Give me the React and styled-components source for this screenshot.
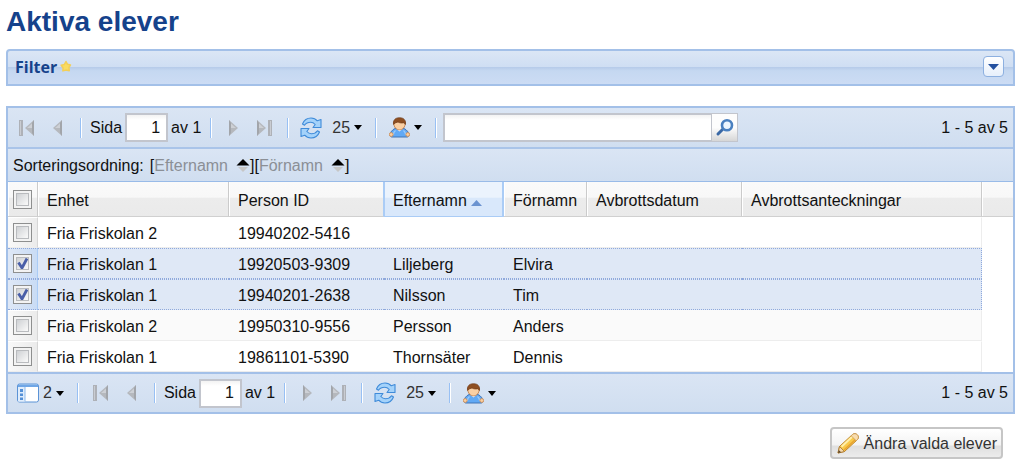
import React, { useState } from "react";
import styled, { createGlobalStyle, css } from "styled-components";

const GlobalStyle = createGlobalStyle`
  *, *::before, *::after { box-sizing: border-box; }
  body {
    margin: 0;
    background: #fff;
    color: #111;
    font: 16px/20px "Liberation Sans", Arial, sans-serif;
  }
  button, input { font: inherit; color: inherit; }
`;

const Page = styled.main`
  padding: 6px 9px 10px 6px;
`;

const Title = styled.h1`
  margin: 0 0 12px;
  color: #15428b;
  font-size: 28px;
  line-height: 31px;
  font-weight: bold;
`;

const FilterPanel = styled.section`
  display: flex;
  align-items: center;
  height: 37px;
  margin-bottom: 20px;
  padding: 0 9px 2px 7px;
  border: 2px solid #a3c0e8;
  border-radius: 4px 4px 0 0;
  background: linear-gradient(#dbe6f5 0, #cfdef3 48%, #b6cbe9 49%, #c5d8f1 60%, #ccdcf4 100%);
`;

const FilterTitle = styled.h2`
  margin: 0;
  color: #15428b;
  font: bold 16px/20px "Open Sans", "Noto Sans", sans-serif;
`;

const ToggleButton = styled.button`
  display: flex;
  align-items: center;
  justify-content: center;
  width: 21px;
  height: 21px;
  margin-left: auto;
  padding: 0;
  border: 1px solid #8db0e0;
  border-radius: 4px;
  background: linear-gradient(#fff, #e6effb);
`;

const Grid = styled.section`
  border: 2px solid #a3c0e8;
`;

const bar = css`
  display: flex;
  align-items: center;
  background: linear-gradient(#dae5f4, #d0def0);
`;

const Toolbar = styled.div`
  ${bar}
  height: 39px;
  padding: 0 5px 0 3px;
`;

const SortBar = styled.div`
  ${bar}
  height: 35px;
  padding: 2px 5px 0;
  border-top: 2px solid #a9c4e9;
  border-bottom: 1px solid #99bbe8;
`;

const SortLabel = styled.span`
  margin-right: 6px;
`;

const SortField = styled.button`
  display: flex;
  align-items: center;
  gap: 8px;
  padding: 0;
  border: 0;
  background: none;
  color: #8b8f96;
`;

const Separator = styled.span`
  flex: none;
  width: 2px;
  height: 20px;
  margin: 0 6px 0 7px;
  border-left: 1px solid #98c0f4;
  background: #fff;
`;

const IconButton = styled.button`
  display: flex;
  flex: none;
  align-items: center;
  justify-content: center;
  width: 31px;
  height: 30px;
  padding: 0;
  border: 0;
  background: none;
`;

const MenuButton = styled.button`
  display: flex;
  flex: none;
  align-items: center;
  gap: 4px;
  height: 30px;
  padding: 0 6px;
  border: 0;
  background: none;
  color: #333;
`;

const PageLabel = styled.label`
  display: flex;
  flex: none;
  align-items: center;
  gap: 3px;
  padding: 0 2px;
`;

const PageInput = styled.input`
  width: 43px;
  height: 29px;
  padding: 0 6px;
  border: 2px solid #c2c5cd;
  background: linear-gradient(#f3f3f3, #fff 5px);
  text-align: right;
`;

const Search = styled.form`
  display: flex;
  flex: 0 1 295px;
  min-width: 0;
  height: 29px;
`;

const SearchInput = styled.input`
  flex: 1;
  min-width: 0;
  padding: 0 6px;
  border: 2px solid #c2c5cd;
  border-right-width: 1px;
  background: linear-gradient(#f3f3f3, #fff 5px);
`;

const SearchButton = styled.button`
  display: flex;
  align-items: center;
  justify-content: center;
  width: 26px;
  padding: 0;
  border: 1px solid #c2c5cd;
  border-left: 0;
  background: linear-gradient(#fdfdfd 50%, #d6d6d6);
`;

const RangeText = styled.span`
  margin-left: auto;
  white-space: nowrap;
`;

const Table = styled.table`
  width: 100%;
  table-layout: fixed;
  border-collapse: separate;
  border-spacing: 0;
`;

const Col = styled.col`
  width: ${(p) => (p.$width ? p.$width + "px" : "auto")};
`;

const HeadCell = styled.th`
  height: 35px;
  padding: 3px 0 0 9px;
  border-right: 1px solid #cbcbcb;
  border-bottom: 1px solid #d0d0d0;
  background: linear-gradient(#fafafa 0, #f8f8f8 45%, #ececec 47%, #eaeaea 100%);
  box-shadow: inset 1px 0 #fff;
  font-weight: normal;
  text-align: left;
  white-space: nowrap;
  ${(p) =>
    p.$sorted &&
    css`
      border-color: #aaccf6;
      background: linear-gradient(#ebf3fd 0, #ebf3fd 45%, #d9e8fb 47%, #d9e8fb 100%);
      box-shadow: inset 1px 0 #aaccf6, inset -1px 0 #aaccf6;
    `}
  ${(p) => p.$beforeSorted && css`border-right-color: #aaccf6;`}
  ${(p) => p.$last && css`border-right: 0;`}
`;

const CheckHead = styled(HeadCell)`
  padding: 1px 1px 0 0;
  text-align: center;
`;

const Row = styled.tr`
  background: ${(p) => (p.$selected ? "#dfe8f6" : p.$striped ? "#fafafa" : "#fff")};
`;

const Cell = styled.td`
  height: 31px;
  padding: 3px 0 0 9px;
  border-top: 1px solid ${(p) => (p.$striped ? "#fafafa" : "#fff")};
  border-bottom: 1px solid #ededed;
  ${(p) =>
    p.$selected &&
    css`
      border-top: 1px dotted #8fa9dc;
      border-bottom: 1px dotted #8fa9dc;
    `}
  ${(p) => p.$edge && css`border-right: 1px ${p.$selected ? "dotted #8fa9dc" : "solid #ededed"};`}
`;

const CheckCell = styled(Cell)`
  padding: 0 1px 0 0;
  border-right: 1px solid ${(p) => (p.$selected ? "#aaccf6" : "#d6d6d6")};
  background: ${(p) =>
    p.$selected ? "linear-gradient(90deg, #dfe8f6, #c9dcf5)" : "linear-gradient(90deg, #f9f9f9, #ebebeb)"};
  text-align: center;
`;

const EmptyCell = styled.td`
  background: #fff;
`;

const CheckBox = styled.input`
  appearance: none;
  display: block;
  width: 19px;
  height: 19px;
  margin: 0 auto;
  border: 1px solid #8e8f8f;
  background: linear-gradient(135deg, #c3c6ca, #f6f6f6 75%);
  box-shadow: inset 0 0 0 2px #f3f3f3, inset 0 0 0 3px #b9bbbe;
  &:checked {
    background: url("data:image/svg+xml,%3Csvg xmlns='http://www.w3.org/2000/svg' viewBox='0 0 17 17'%3E%3Cpath d='M4.500 7.500l3.500 5.500 5-9.500' fill='none' stroke='%234a5fa8' stroke-width='2.800'/%3E%3C/svg%3E"),
      linear-gradient(135deg, #c3c6ca, #f6f6f6 75%);
  }
`;

const FooterBar = styled(Toolbar)`
  border-top: 2px solid #a3c0e8;
  height: 40px;
`;

const Actions = styled.div`
  display: flex;
  justify-content: flex-end;
  padding: 13px 12px 0 0;
`;

const ActionButton = styled.button`
  display: flex;
  align-items: center;
  gap: 4px;
  height: 32px;
  padding: 2px 4px 0;
  border: 2px solid #c6c6c6;
  border-radius: 4px;
  background: linear-gradient(#fff 0, #f3f3f3 58%, #dfdfdf 60%, #ececec 100%);
  color: #333;
`;

const Star = () => (
  <svg width="16" height="14" viewBox="0 0 16 14" aria-hidden="true">
    <path
      d="M9 1.500l1.500 2.800 3 .6-1.600 2.600.4 3.200-3.300-.7-3.100.9.2-3.200-1.900-2.500 3.200-.8z"
      fill="#f9dc62"
      stroke="#f3cf58"
      strokeWidth="1.500"
      strokeLinejoin="round"
    />
  </svg>
);

const Caret = ({ color = "#000", up = false, width = 8 }) => (
  <svg width={width} height={width > 8 ? 6 : 5} viewBox="0 0 8 5" preserveAspectRatio="none" aria-hidden="true">
    <path d={up ? "M0 5h8L4 0z" : "M0 0h8L4 5z"} fill={color} />
  </svg>
);

const NavIcon = ({ kind }) => {
  const flip = kind === "next" || kind === "last";
  const barred = kind === "first" || kind === "last";
  const w = barred ? 17 : 11;
  const x = barred ? 7 : 1;
  return (
    <svg width={w} height="18" viewBox={`0 0 ${w} 18`} aria-hidden="true">
      <g transform={flip ? `translate(${w} 0) scale(-1 1)` : undefined}>
        {barred && (
          <>
            <rect x="1" y="1" width="4" height="16" fill="#aeb1b7" />
            <rect x="2" y="2" width="1" height="14" fill="#c9ccd2" />
          </>
        )}
        <path d={`M${x + 9} 1v16L${x} 9z`} fill="#b5b8bd" />
        <path d={`M${x + 9} 1v16l-2-3V4z`} fill="#a2a5aa" />
        <path d={`M${x + 7} 4.500L${x + 2} 9 ${x + 7} 9z`} fill="#cdd0d5" />
      </g>
    </svg>
  );
};

const RefreshIcon = () => (
  <svg width="22" height="22" viewBox="0 0 22 22" aria-hidden="true">
    <g fill="#a4d2fa" stroke="#3f8bd9" strokeWidth="1.100" strokeLinejoin="round">
      <path d="M2.500 7C4 3.200 7.300 1 11 1c2.600 0 4.800 1 6.300 2.800L21 2.500v8h-8l2.200-3C13.900 6 12.500 5.200 10.700 5.200 8 5.200 6 6 4.500 8.200z" />
      <path d="M19.500 15C18 18.800 14.700 21 11 21c-2.600 0-4.800-1-6.300-2.800L1 19.500v-8h8l-2.200 3c1.300 1.500 2.700 2.300 4.500 2.300 2.700 0 4.700-.8 6.200-3z" />
    </g>
  </svg>
);

const UserIcon = () => (
  <svg width="21" height="21" viewBox="0 0 21 21" aria-hidden="true">
    <path d="M6 11.500C3 13 1.500 15 1 18c0 1 .8 2 1.700 2h15.600c.9 0 1.700-1 1.700-2-.5-3-2-5-5-6.500z" fill="#61a9f5" stroke="#4374b5" />
    <path d="M6.500 13.500c-1.500 1-2 2.500-2.300 4.500M14.500 13.500c1.500 1 2 2.500 2.300 4.500" fill="none" stroke="#9ccbfa" strokeWidth="1.400" />
    <path d="M7.500 12l3 2.500 3-2.500z" fill="#e9f4ff" />
    <circle cx="2.200" cy="17.500" r="1.900" fill="#f9cfa2" stroke="#d08a4d" strokeWidth=".8" />
    <circle cx="18.800" cy="17.500" r="1.900" fill="#f9cfa2" stroke="#d08a4d" strokeWidth=".8" />
    <path d="M4.800 6c0 4.300 2.400 6.800 5.700 6.800s5.700-2.500 5.700-6.800c0-2-2-3.500-5.700-3.500S4.800 4 4.800 6z" fill="#fbd0a3" stroke="#c07a42" strokeWidth=".8" />
    <path d="M4.600 7.500C3.800 3.500 6 .7 10.500.7s6.700 2.800 5.900 6.800L15 5.700c-2 .5-4.500.3-6-.7L6 6z" fill="#8e4f22" stroke="#703a15" strokeWidth=".7" />
  </svg>
);

const SearchIcon = () => (
  <svg width="20" height="20" viewBox="0 0 20 20" aria-hidden="true">
    <path d="M7.500 11.500L3 16" stroke="#3a68a5" strokeWidth="3" strokeLinecap="round" />
    <circle cx="12" cy="7.200" r="5" fill="#edf6ff" stroke="#4a80c0" strokeWidth="2.600" />
  </svg>
);

const LayoutIcon = () => (
  <svg width="22" height="20" viewBox="0 0 22 20" aria-hidden="true">
    <rect x=".5" y="1" width="21" height="18" rx="2" fill="#fff" stroke="#5b93d6" />
    <path d="M1 1.500h20v2.500H1z" fill="#6fa6e6" />
    <path d="M1 4h7v14.500H1z" fill="#e0edfc" />
    <path d="M8 4v14.500" stroke="#8fbaec" />
    <path d="M3 6h3v3H3zM3 10.500h3v2.500H3zM3 14.500h3V17H3z" fill="#5590d6" />
  </svg>
);

const SortIcon = () => (
  <svg width="14" height="14" viewBox="0 0 14 14" aria-hidden="true">
    <path d="M.5 6.500h13L7 0z" fill="#000" />
    <path d="M2 8h10l-5 5z" fill="#c6c6c6" />
  </svg>
);

const PencilIcon = () => (
  <svg width="24" height="24" viewBox="0 0 24 24" aria-hidden="true">
    <path d="M2 21l1.500-6.500L16.500 2.500c1.500-1.300 3.500-1 4.800.3s1.500 3.200.2 4.700L8.500 19.500z" fill="#f9c94a" stroke="#c08427" strokeLinejoin="round" />
    <path d="M5.500 14.700L17 4" stroke="#ffefab" strokeWidth="2" />
    <path d="M8 18L20 7" stroke="#e9a431" strokeWidth="1.500" />
    <path d="M16.500 2.500c1.500-1.300 3.500-1 4.800.3s1.500 3.200.2 4.700l-1.300 1.300-5-5z" fill="#f8dcae" stroke="#c99b59" strokeWidth=".8" />
    <path d="M3.500 14.500l5 5L2 21z" fill="#f4d9ae" stroke="#a6732b" strokeWidth=".8" />
    <path d="M2 21l.8-3 2.300 2.200z" fill="#5d472a" />
  </svg>
);

const people = [
  ["Fria Friskolan 2", "19940202-5416", "", ""],
  ["Fria Friskolan 1", "19920503-9309", "Liljeberg", "Elvira"],
  ["Fria Friskolan 1", "19940201-2638", "Nilsson", "Tim"],
  ["Fria Friskolan 2", "19950310-9556", "Persson", "Anders"],
  ["Fria Friskolan 1", "19861101-5390", "Thornsäter", "Dennis"],
];

const columns = [
  { name: "Enhet", width: 191 },
  { name: "Person ID", width: 155 },
  { name: "Efternamn", width: 120, sorted: true },
  { name: "Förnamn", width: 83 },
  { name: "Avbrottsdatum", width: 155 },
  { name: "Avbrottsanteckningar", width: 240 },
];

const Paging = () => (
  <>
    <IconButton aria-label="Första sidan"><NavIcon kind="first" /></IconButton>
    <IconButton aria-label="Föregående sida"><NavIcon kind="prev" /></IconButton>
    <Separator />
    <PageLabel>
      Sida
      <PageInput type="text" defaultValue="1" />
      av 1
    </PageLabel>
    <Separator />
    <IconButton aria-label="Nästa sida"><NavIcon kind="next" /></IconButton>
    <IconButton aria-label="Sista sidan"><NavIcon kind="last" /></IconButton>
    <Separator />
    <IconButton aria-label="Uppdatera"><RefreshIcon /></IconButton>
    <MenuButton>25<Caret /></MenuButton>
    <Separator />
    <MenuButton aria-label="Användare"><UserIcon /><Caret /></MenuButton>
  </>
);

export default function App() {
  const [selected, setSelected] = useState([false, true, true, false, false]);
  const toggle = (i) => setSelected((s) => s.map((v, n) => (n === i ? !v : v)));
  const all = selected.every(Boolean);

  return (
    <>
      <GlobalStyle />
      <Page>
        <Title>Aktiva elever</Title>
        <FilterPanel>
          <FilterTitle>Filter</FilterTitle>
          <Star />
          <ToggleButton aria-label="Visa filter"><Caret color="#2350a0" width={11} /></ToggleButton>
        </FilterPanel>

        <Grid>
          <Toolbar>
            <Paging />
            <Separator />
            <Search onSubmit={(e) => e.preventDefault()}>
              <SearchInput type="text" aria-label="Sök" />
              <SearchButton aria-label="Sök"><SearchIcon /></SearchButton>
            </Search>
            <RangeText>1 - 5 av 5</RangeText>
          </Toolbar>
          <SortBar>
            <SortLabel>Sorteringsordning:</SortLabel>
            [<SortField>Efternamn<SortIcon /></SortField>][
            <SortField>Förnamn<SortIcon /></SortField>]
          </SortBar>
          <Table>
            <colgroup>
              <Col $width={30} />
              {columns.map((c) => <Col key={c.name} $width={c.width} />)}
              <Col />
            </colgroup>
            <thead>
              <tr>
                <CheckHead>
                  <CheckBox
                    type="checkbox"
                    aria-label="Markera alla"
                    checked={all}
                    onChange={() => setSelected(people.map(() => !all))}
                  />
                </CheckHead>
                {columns.map((c, i) => (
                  <HeadCell key={c.name} $sorted={c.sorted} $beforeSorted={columns[i + 1]?.sorted}>
                    {c.name} {c.sorted && <Caret up color="#6b93d0" width={11} />}
                  </HeadCell>
                ))}
                <HeadCell $last aria-hidden="true" />
              </tr>
            </thead>
            <tbody>
              {people.map((person, i) => (
                <Row key={person[1]} $selected={selected[i]} $striped={i % 2 === 1}>
                  <CheckCell $selected={selected[i]}>
                    <CheckBox
                      type="checkbox"
                      aria-label={`Markera ${person[1]}`}
                      checked={selected[i]}
                      onChange={() => toggle(i)}
                    />
                  </CheckCell>
                  {columns.map((c, n) => (
                    <Cell
                      key={c.name}
                      $selected={selected[i]}
                      $striped={i % 2 === 1}
                      $edge={n === columns.length - 1}
                    >
                      {person[n]}
                    </Cell>
                  ))}
                  <EmptyCell />
                </Row>
              ))}
            </tbody>
          </Table>
          <FooterBar>
            <MenuButton aria-label="Kolumner 2"><LayoutIcon />2<Caret /></MenuButton>
            <Separator />
            <Paging />
            <RangeText>1 - 5 av 5</RangeText>
          </FooterBar>
        </Grid>

        <Actions>
          <ActionButton><PencilIcon />Ändra valda elever</ActionButton>
        </Actions>
      </Page>
    </>
  );
}
